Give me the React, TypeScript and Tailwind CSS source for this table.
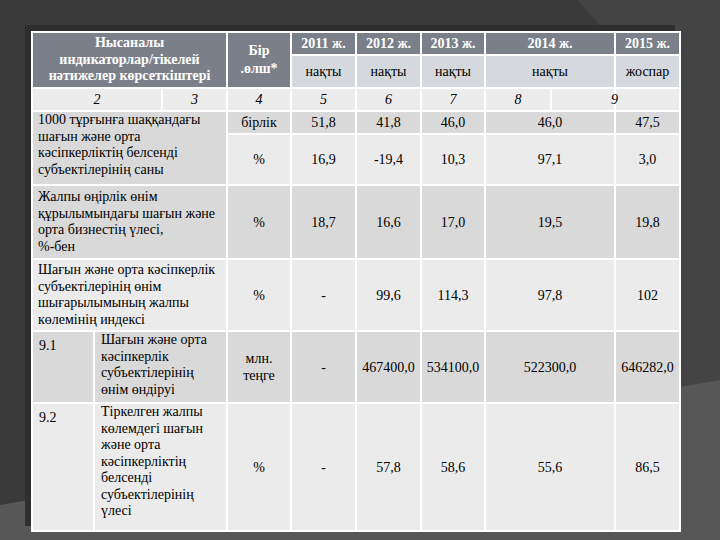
import type React from "react"

type CellProps = {
  children?: React.ReactNode
  className?: string
  colSpan?: number
  rowSpan?: number
}

const serif = "font-['Liberation_Serif','Times_New_Roman',serif] text-[14px]"

function Cell({ children, className = "", colSpan, rowSpan }: CellProps) {
  return (
    <td
      colSpan={colSpan}
      rowSpan={rowSpan}
      className={`border-2 border-white p-0 text-center align-middle ${serif} ${className}`}
    >
      {children}
    </td>
  )
}

function Head({ children, colSpan }: { children: React.ReactNode; colSpan?: number }) {
  return (
    <Cell colSpan={colSpan} className="bg-[#7b7f89] font-bold text-white">
      {children}
    </Cell>
  )
}

function Sub({ children, colSpan }: { children: React.ReactNode; colSpan?: number }) {
  return (
    <Cell colSpan={colSpan} className="bg-[#d5d8dc]">
      {children}
    </Cell>
  )
}

function Lines({ lines }: { lines: string[] }) {
  return (
    <div className="text-left leading-[16.5px]">
      {lines.map((l) => (
        <div key={l} className="whitespace-nowrap">
          {l}
        </div>
      ))}
    </div>
  )
}

const widths = [62, 68, 65, 64, 65, 65, 64, 66, 64, 65]

const dark = "bg-[#d9d9d9]"
const light = "bg-[#ebebeb]"

export default function App() {
  return (
    <div className={`relative h-[540px] w-[720px] overflow-hidden bg-[#3a3a3a] text-black ${serif}`}>
      <svg className="absolute inset-0" width="720" height="540" viewBox="0 0 720 540">
        <polygon points="577,0 720,0 720,540 600,540 600,25" fill="#444444" />
        <polygon points="0,505 720,380 720,540 0,540" fill="#575757" />
      </svg>

      <div className="relative pl-[31px] pt-[31px]">
        <table className={`w-[648px] table-fixed border-collapse shadow-[-6px_-6px_0_0_#2e2e2e] ${serif}`}>
          <colgroup>
            {widths.map((w, i) => (
              <col key={i} style={{ width: w }} />
            ))}
          </colgroup>
          <tbody>
            <tr className="h-[21px]">
              <Cell colSpan={3} rowSpan={2} className="bg-[#7b7f89] font-bold leading-[16.5px] text-white">
                Нысаналы
                <br />
                индикаторлар/тікелей
                <br />
                нәтижелер көрсеткіштері
              </Cell>
              <Cell rowSpan={2} className="bg-[#7b7f89] font-bold leading-[18px] text-white">
                Бір
                <br />
                .өлш*
              </Cell>
              <Head>2011 ж.</Head>
              <Head>2012 ж.</Head>
              <Head>2013 ж.</Head>
              <Head colSpan={2}>2014 ж.</Head>
              <Head>2015 ж.</Head>
            </tr>
            <tr className="h-[33px]">
              <Sub>нақты</Sub>
              <Sub>нақты</Sub>
              <Sub>нақты</Sub>
              <Sub colSpan={2}>нақты</Sub>
              <Sub>жоспар</Sub>
            </tr>

            <tr className="h-[23px] bg-[#ececec]">
              <Cell colSpan={2} className="italic">2</Cell>
              <Cell className="italic">3</Cell>
              <Cell className="italic">4</Cell>
              <Cell className="italic">5</Cell>
              <Cell className="italic">6</Cell>
              <Cell className="italic">7</Cell>
              <Cell className="italic">8</Cell>
              <Cell className="text-right italic">
                <span className="relative left-[4px]">9</span>
              </Cell>
              <Cell />
            </tr>

            <tr className={`h-[20px] ${dark}`}>
              <Cell colSpan={3} rowSpan={2} className={`${dark} pl-[5px] align-top`}>
                <Lines
                  lines={[
                    "1000 тұрғынға шаққандағы",
                    "шағын және орта",
                    "кәсіпкерліктің белсенді",
                    "субъектілерінің саны",
                  ]}
                />
              </Cell>
              <Cell>бірлік</Cell>
              <Cell>51,8</Cell>
              <Cell>41,8</Cell>
              <Cell>46,0</Cell>
              <Cell colSpan={2}>46,0</Cell>
              <Cell>47,5</Cell>
            </tr>
            <tr className={`h-[51px] ${light}`}>
              <Cell>%</Cell>
              <Cell>16,9</Cell>
              <Cell>-19,4</Cell>
              <Cell>10,3</Cell>
              <Cell colSpan={2}>97,1</Cell>
              <Cell>3,0</Cell>
            </tr>

            <tr className={`h-[74px] ${dark}`}>
              <Cell colSpan={3} className="pl-[5px]">
                <Lines
                  lines={[
                    "Жалпы өңірлік өнім",
                    "құрылымындағы шағын және",
                    "орта бизнестің үлесі,",
                    "%-бен",
                  ]}
                />
              </Cell>
              <Cell>%</Cell>
              <Cell>18,7</Cell>
              <Cell>16,6</Cell>
              <Cell>17,0</Cell>
              <Cell colSpan={2}>19,5</Cell>
              <Cell>19,8</Cell>
            </tr>

            <tr className={`h-[72px] ${light}`}>
              <Cell colSpan={3} className="pl-[5px]">
                <Lines
                  lines={[
                    "Шағын және орта кәсіпкерлік",
                    "субъектілерінің өнім",
                    "шығарылымының жалпы",
                    "көлемінің индексі",
                  ]}
                />
              </Cell>
              <Cell>%</Cell>
              <Cell>-</Cell>
              <Cell>99,6</Cell>
              <Cell>114,3</Cell>
              <Cell colSpan={2}>97,8</Cell>
              <Cell>102</Cell>
            </tr>

            <tr className={`h-[72px] ${dark}`}>
              <Cell className="pl-[6px] pt-[3px] text-left align-top">9.1</Cell>
              <Cell colSpan={2} className="pl-[6px] align-top">
                <Lines lines={["Шағын және орта", "кәсіпкерлік", "субъектілерінің", "өнім өндіруі"]} />
              </Cell>
              <Cell className="leading-[17px]">
                млн.
                <br />
                теңге
              </Cell>
              <Cell>-</Cell>
              <Cell>467400,0</Cell>
              <Cell>534100,0</Cell>
              <Cell colSpan={2}>522300,0</Cell>
              <Cell>646282,0</Cell>
            </tr>

            <tr className={`h-[128px] ${light}`}>
              <Cell className="pl-[6px] pt-[3px] text-left align-top">9.2</Cell>
              <Cell colSpan={2} className="pl-[6px] align-top">
                <Lines
                  lines={[
                    "Тіркелген жалпы",
                    "көлемдегі шағын",
                    "және орта",
                    "кәсіпкерліктің",
                    "белсенді",
                    "субъектілерінің",
                    "үлесі",
                  ]}
                />
              </Cell>
              <Cell>%</Cell>
              <Cell>-</Cell>
              <Cell>57,8</Cell>
              <Cell>58,6</Cell>
              <Cell colSpan={2}>55,6</Cell>
              <Cell>86,5</Cell>
            </tr>
          </tbody>
        </table>
      </div>
    </div>
  )
}
